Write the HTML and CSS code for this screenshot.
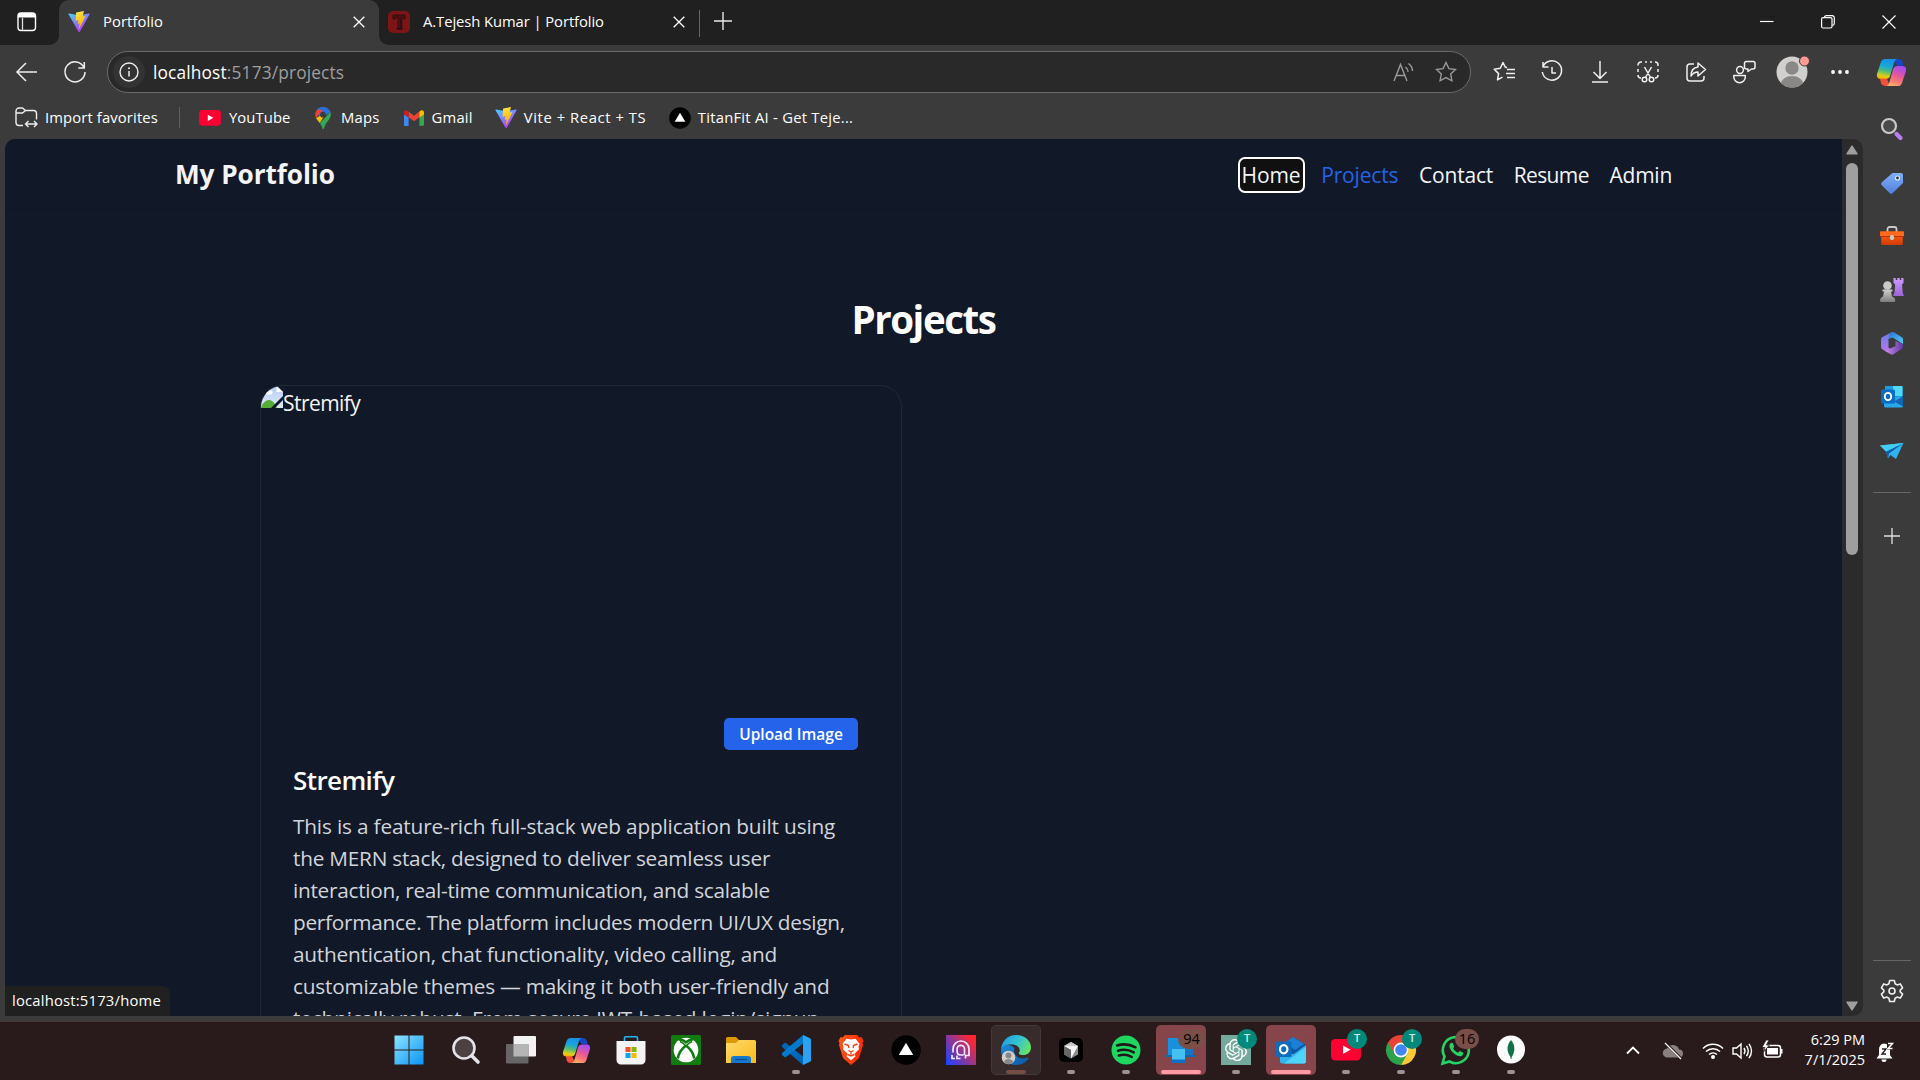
FILE: index.html
```html
<!DOCTYPE html>
<html lang="en">
<head>
<meta charset="utf-8">
<title>Portfolio</title>
<link rel="stylesheet" href="styles.css">
</head>
<body>
<svg class="defs" aria-hidden="true">
  <defs>
    <linearGradient id="viteBlue" x1="0" y1="0" x2="0.6" y2="1"><stop offset="0" stop-color="#41d1ff"/><stop offset="1" stop-color="#bd34fe"/></linearGradient>
    <linearGradient id="viteBolt" x1="0.4" y1="0" x2="0.6" y2="1"><stop offset="0" stop-color="#ffea83"/><stop offset="0.1" stop-color="#ffdd35"/><stop offset="1" stop-color="#ffa800"/></linearGradient>
    <linearGradient id="copA" x1="0.5" y1="0" x2="0.3" y2="1"><stop offset="0" stop-color="#1a8fe8"/><stop offset="0.35" stop-color="#16a6dc"/><stop offset="0.6" stop-color="#4dbb7a"/><stop offset="0.85" stop-color="#d8cf1e"/><stop offset="1" stop-color="#ffb000"/></linearGradient>
    <linearGradient id="copB" x1="0.7" y1="0" x2="0.3" y2="1"><stop offset="0" stop-color="#a04df5"/><stop offset="0.45" stop-color="#e5579b"/><stop offset="0.75" stop-color="#fb7a72"/><stop offset="1" stop-color="#ffb36b"/></linearGradient>
    <linearGradient id="win" x1="0" y1="0" x2="1" y2="1"><stop offset="0" stop-color="#8ce4ff"/><stop offset="1" stop-color="#0a93f5"/></linearGradient>
    <linearGradient id="brave" x1="0" y1="0" x2="1" y2="0.3"><stop offset="0" stop-color="#ff5a1c"/><stop offset="1" stop-color="#ff2a00"/></linearGradient>
    <linearGradient id="head" x1="0" y1="0.9" x2="1" y2="0.1"><stop offset="0" stop-color="#1f42ff"/><stop offset="0.55" stop-color="#a33583"/><stop offset="0.9" stop-color="#ff2630"/></linearGradient>
    <linearGradient id="edgeTop" x1="0" y1="0.3" x2="1" y2="0.7"><stop offset="0" stop-color="#1e9fe0"/><stop offset="0.5" stop-color="#35c3d5"/><stop offset="1" stop-color="#6be55a"/></linearGradient>
    <linearGradient id="edgeLow" x1="0" y1="0" x2="1" y2="1"><stop offset="0" stop-color="#1b8bd8"/><stop offset="1" stop-color="#0c59a4"/></linearGradient>
    <linearGradient id="folder" x1="0" y1="0" x2="1" y2="1"><stop offset="0" stop-color="#ffdb6e"/><stop offset="1" stop-color="#fbb917"/></linearGradient>
    <linearGradient id="tag" x1="0" y1="0" x2="0" y2="1"><stop offset="0" stop-color="#7fb0f5"/><stop offset="1" stop-color="#5080dc"/></linearGradient>
    <linearGradient id="rook" x1="0" y1="0" x2="0" y2="1"><stop offset="0" stop-color="#cf9cff"/><stop offset="1" stop-color="#9a63d8"/></linearGradient>
    <linearGradient id="pawn" x1="0" y1="0" x2="0" y2="1"><stop offset="0" stop-color="#d0d0d0"/><stop offset="1" stop-color="#7d7d7d"/></linearGradient>
    <linearGradient id="box" x1="0" y1="0" x2="0" y2="1"><stop offset="0" stop-color="#f7630c"/><stop offset="1" stop-color="#d23c08"/></linearGradient>
    <linearGradient id="m1" x1="0" y1="0" x2="0" y2="1"><stop offset="0" stop-color="#6a7de8"/><stop offset="1" stop-color="#b678e6"/></linearGradient>
    <linearGradient id="m2" x1="0" y1="0" x2="1" y2="1"><stop offset="0" stop-color="#2a6fd8"/><stop offset="1" stop-color="#54d0f8"/></linearGradient>
    <linearGradient id="m3" x1="0" y1="0" x2="1" y2="0"><stop offset="0" stop-color="#cf8bf0"/><stop offset="1" stop-color="#5d3aa0"/></linearGradient>
    <linearGradient id="sky" x1="0" y1="0" x2="0" y2="1"><stop offset="0" stop-color="#b7cdf7"/><stop offset="1" stop-color="#dfe9fb"/></linearGradient>
    <symbol id="vite" viewBox="0 0 32 32"><path d="M31.4 4.7 17 30.6a.8.8 0 0 1-1.4 0L.7 4.7a.8.8 0 0 1 .8-1.2l14.6 2.6 14.5-2.6a.8.8 0 0 1 .8 1.2z" fill="url(#viteBlue)"/><path d="M22.8.1 12.1 2.2a.4.4 0 0 0-.3.4L11.1 13.7a.4.4 0 0 0 .5.4l3-.7c.3 0 .5.2.5.5l-.9 4.4c0 .3.2.5.5.4l1.8-.5c.3 0 .6.2.5.5l-1.4 6.9c0 .4.5.7.7.3l8.900-18c.2-.3-.1-.7-.4-.6l-3.100.6a.4.4 0 0 1-.5-.5l2-7c.1-.3-.1-.6-.4-.5z" fill="url(#viteBolt)"/></symbol>
    <symbol id="copilot" viewBox="0 0 32 30"><path d="M17 1h6.500a4 4 0 0 1 3.700 2.800L28.500 8H22z" fill="#1746c9"/><path d="M14.500 29H9a4 4 0 0 1-3.800-2.800L4 21h7z" fill="#f0503c"/><path d="M9.500 1H22c-2 .5-2.800 2-3.400 4L14.500 18.500C13.700 21 12 21.500 10 21.500H4.500C1 21.500.4 18.500 1.300 15.500L5 4.500C5.900 2 7.300 1 9.500 1z" fill="url(#copA)"/><path d="M22.500 29H10.500c2-.5 2.700-2 3.300-4L17.700 11.500C18.500 9 20 8.200 22 8.200h5.500c3.500 0 4.100 3 3.200 6L27 25.500c-.8 2.500-2.300 3.500-4.500 3.500z" fill="url(#copB)"/></symbol>
    <symbol id="close" viewBox="0 0 12 12"><path d="M.7.7l10.600 10.600M11.300.7.7 11.300"/></symbol>
    <symbol id="star" viewBox="0 0 22 22"><path d="M11 1.500l2.900 6.100 6.600.9-4.800 4.600 1.200 6.700L11 16.600l-5.900 3.200 1.200-6.700L1.500 8.500l6.600-.9z"/></symbol>
    <symbol id="youtube" viewBox="0 0 30 22"><rect width="30" height="21.500" rx="4.500" fill="#ff0033"/><path d="M12 6.500v8.500l7.500-4.200z" fill="#fff"/></symbol>
    <symbol id="vercel" viewBox="0 0 30 30"><circle cx="15" cy="15" r="14.700" fill="#000"/><path d="M15 7.800 22.200 20H7.800z" fill="#fff"/></symbol>
  </defs>
</svg>

<div class="tabstrip">
  <div class="workspaces"><svg width="20" height="20" viewBox="0 0 20 20"><rect x="1" y="1" width="17.500" height="17.500" rx="3" fill="none" stroke="#fff" stroke-width="1.400"/><path d="M1 5.500V4a3 3 0 0 1 3-3h11.500a3 3 0 0 1 3 3v1.500z" fill="#fff"/><path d="M5.500 6v12" stroke="#ddd" stroke-width="1.300"/></svg></div>
  <div class="tab tab-active"><svg class="fav" width="22" height="22"><use href="#vite"/></svg><span class="title-first">Portfolio</span><svg class="x" width="12" height="12"><use href="#close"/></svg></div>
  <div class="tab tab-second"><svg class="fav" width="22" height="22" viewBox="0 0 22 22"><rect width="22" height="22" rx="5" fill="#7d1416"/><path d="M5 4h12v4h-1.500l-1-1.500h-1.500V17h1v1H9v-1h1V6.500H8L7 8H5z" fill="#5b0c0e" stroke="#2a1212" stroke-width="1"/><path d="M13.500 8v10h-4" fill="none" stroke="#221414" stroke-width="1.600"/></svg><span class="title-second">A.Tejesh Kumar | Portfolio</span><svg class="x" width="12" height="12"><use href="#close"/></svg></div>
  <div class="tab-new"><svg width="20" height="20" viewBox="0 0 20 20"><path d="M10 1v18M1 10h18" stroke="#e8e8e8" stroke-width="1.400"/></svg></div>
  <div class="win-controls">
    <svg width="14" height="14" viewBox="0 0 14 14"><path d="M0 6.500h13.500"/></svg>
    <svg width="14" height="14" viewBox="0 0 14 14"><rect x=".6" y="2.600" width="10.400" height="10.400" rx="1.500"/><path d="M3.500 2.500C3.500 1.200 4 .6 5.500.6H11a2.200 2.200 0 0 1 2.300 2.200V8.500c0 1.300-.8 1.900-2 2"/></svg>
    <svg width="14" height="14" viewBox="0 0 14 14"><path d="M.5.5l13 13M13.500.5l-13 13"/></svg>
  </div>
</div>

<div class="toolbar">
  <svg class="back" width="22" height="20" viewBox="0 0 22 20"><path d="M21 10H1M10 1L1 10l9 9"/></svg>
  <svg class="reload" width="22" height="22" viewBox="0 0 22 22"><path d="M20 6.500A10 10 0 1 0 21 11M20.300 1v6h-6"/></svg>
  <div class="address">
    <span class="info"><svg width="20" height="20" viewBox="0 0 20 20"><circle cx="10" cy="10" r="9" fill="none" stroke="#eee" stroke-width="1.400"/><path d="M10 9v5.500" stroke="#eee" stroke-width="1.500"/><circle cx="10" cy="6.200" r="1" fill="#eee"/></svg></span>
    <span class="url"><b>localhost</b>:5173/projects</span>
    <svg class="aloud" width="22" height="20" viewBox="0 0 22 20"><path d="M1 19L7.500 2.500 14 19M3.500 13.500h8M12.500 5q2.500 2 2.500 5M15.500 1.500q4 3 4 7.500"/></svg>
    <svg class="starbtn" width="22" height="22"><use href="#star"/></svg>
  </div>
  <div class="actions">
    <span><svg width="23" height="22" viewBox="0 0 23 22"><path d="M14 6.700L12.200 6 10 1.500 7.300 7.300 1.200 8.200l4.400 4.400-1.100 6.300 5-2.800M14 8.500h8M13 12.500h9M14 16.500h8"/></svg></span>
    <span><svg width="22" height="22" viewBox="0 0 22 22"><path d="M2 5.500A9.700 9.700 0 1 1 1.300 11M2 1v5h5.500M11 6v6h4"/></svg></span>
    <span><svg width="18" height="22" viewBox="0 0 18 22"><path d="M9 0v17M2.500 11L9 17.500 15.500 11M1 21h16"/></svg></span>
    <span><svg width="22" height="22" viewBox="0 0 22 22"><path d="M1 4.500V4a3 3 0 0 1 3-3h1M8 1h2M13 1h2M18 1a3 3 0 0 1 3 3v1M21 8v3M21 14a3 3 0 0 1-3 3M1 8v3M1 14a3 3 0 0 0 3 3M7.500 6l6 10.500M14.500 6l-6 10.500"/><circle cx="7.500" cy="18.500" r="2.300"/><circle cx="14.500" cy="18.500" r="2.300"/></svg></span>
    <span><svg width="22" height="22" viewBox="0 0 22 22"><path d="M9 3H5a3 3 0 0 0-3 3v11a3 3 0 0 0 3 3h11a3 3 0 0 0 3-3v-2M13 2l7.500 6.500L13 15v-4c-3.500 0-5 1-7 4 0-5 2.500-8.500 7-9z"/></svg></span>
    <span><svg width="24" height="24" viewBox="0 0 24 24"><circle cx="8" cy="10" r="3.400"/><path d="M1.800 15.500h11.500v1.500a5.700 5.700 0 0 1-11.500 0zM14.500 1.500h6.500a2 2 0 0 1 2 2V7a2 2 0 0 1-2 2h-1.500l-3.500 2.500V9h-1.500a2 2 0 0 1-2-2V3.500a2 2 0 0 1 2-2z"/></svg></span>
    <span class="avatar"><svg width="32" height="32" viewBox="0 0 32 32"><defs><clipPath id="av"><circle cx="16" cy="16" r="15.500"/></clipPath></defs><g clip-path="url(#av)" stroke="none"><rect width="32" height="32" fill="#d2d0ce"/><circle cx="16" cy="12" r="6.700" fill="#8a8886"/><ellipse cx="16" cy="28" rx="11" ry="8" fill="#8a8886"/></g><circle cx="28.500" cy="5" r="5" fill="#ff9b93" stroke="#3b3b3b" stroke-width="1"/></svg></span>
    <span><svg width="18" height="6" viewBox="0 0 18 6"><g fill="#fff" stroke="none"><circle cx="2" cy="3" r="1.900"/><circle cx="9" cy="3" r="1.900"/><circle cx="16" cy="3" r="1.900"/></g></svg></span>
  </div>
  <svg class="cop" width="31" height="29"><use href="#copilot"/></svg>
</div>

<div class="main">
  <div class="left">
    <div class="bookmarks">
      <svg class="b-import" width="24" height="22" viewBox="0 0 24 22"><path d="M8 18.500H4a3 3 0 0 1-3-3V4a3 3 0 0 1 3-3h3.500l3 2.500H18.500a3 3 0 0 1 3 3v6M1 6h6.500l3-2.500M11 17h10.500M13.500 14l-3 3 3 3M19 14l3 3-3 3"/></svg>
      <span class="bt-import">Import favorites</span>
      <i class="sep"></i>
      <svg class="b-yt" width="22" height="16"><use href="#youtube"/></svg><span class="bt-youtube">YouTube</span>
      <svg class="b-maps" width="16" height="22" viewBox="0 0 16 22"><path d="M8 0a8 8 0 0 0-6 2.700L8 8z" fill="#4a8af4"/><path d="M8 0a8 8 0 0 1 7.500 5L5 13 2 2.700A8 8 0 0 1 8 0z" fill="#2b6fdd"/><path d="M2 2.700A8 8 0 0 0 1 11l7-8z" fill="#ea4335"/><path d="M1 11c1 2 2.500 3 3.800 5L11 6z" fill="#fbbc04"/><path d="M15.500 5c1 4-.5 6.500-3 9.500-2 2.500-2.800 4.500-3.500 7-.3.700-1.200.7-1.500 0-.6-2-1.300-3.500-2.500-5.500z" fill="#34a853"/><circle cx="8" cy="7.700" r="2.900" fill="#3b3b3b"/></svg><span class="bt-maps">Maps</span>
      <svg class="b-gmail" width="20" height="16" viewBox="0 0 20 16"><path d="M0 4v10.500A1.200 1.200 0 0 0 1.300 16H4.600V6z" fill="#4285f4"/><path d="M20 4v10.500a1.200 1.200 0 0 1-1.300 1.300h-3.300V6z" fill="#34a853"/><path d="M4.600 7.200V1.600L10 5.700l5.400-4.100v5.600L10 11.300z" fill="#ea4335"/><path d="M0 2.500v2l4.600 3.200V1.600L3.500.8C2 -.3 0 .6 0 2.500z" fill="#c5221f"/><path d="M20 2.500v2l-4.600 3.200V1.600l1.100-.8C18-.3 20 .6 20 2.500z" fill="#fbbc04"/></svg><span class="bt-gmail">Gmail</span>
      <svg class="b-vite" width="22" height="22"><use href="#vite"/></svg><span class="bt-vite">Vite + React + TS</span>
      <svg class="b-titan" width="22" height="22"><use href="#vercel"/></svg><span class="bt-titan">TitanFit AI - Get Teje...</span>
    </div>
    <div class="viewport">
      <div class="page">
        <header class="nav">
          <span class="brand">My Portfolio</span>
          <nav class="links"><a class="home">Home</a><a class="active">Projects</a><a class="contact">Contact</a><a class="resume">Resume</a><a class="admin">Admin</a></nav>
        </header>
        <h1>Projects</h1>
        <article class="card">
          <div class="thumb"><svg width="22" height="22" viewBox="0 0 22 22"><path d="M0 0h16l6 6v16H0z" fill="url(#sky)"/><path d="M15.500 0v6H22z" fill="#fff"/><ellipse cx="8" cy="6.500" rx="3.500" ry="2.200" fill="#fff"/><path d="M0 22c1-5 5-8 8-8 4 0 6 4 8 8z" fill="#57ad3a"/><path d="M10 22L22 10v4l-8 8z" fill="#111827"/></svg><span class="alt">Stremify</span></div>
          <div class="card-body">
            <button class="upload">Upload Image</button>
            <h3>Stremify</h3>
            <p><span class="line1">This is a feature-rich full-stack web application built using</span><br><span class="line2">the MERN stack, designed to deliver seamless user</span><br><span class="line3">interaction, real-time communication, and scalable</span><br><span class="line4">performance. The platform includes modern UI/UX design,</span><br><span class="line5">authentication, chat functionality, video calling, and</span><br><span class="line6">customizable themes — making it both user-friendly and</span><br><span class="line7">technically robust. From secure JWT-based login/signup</span></p>
          </div>
        </article>
        <div class="status">localhost:5173/home</div>
      </div>
      <div class="scrollbar">
        <svg width="12" height="10" viewBox="0 0 12 10"><path d="M6 1.200L11 8.800H1z" fill="#9f9f9f" stroke="#9f9f9f" stroke-width="1.500" stroke-linejoin="round"/></svg>
        <i class="thumb-bar"></i>
        <svg class="down" width="12" height="10" viewBox="0 0 12 10"><path d="M6 8.800L11 1.200H1z" fill="#9f9f9f" stroke="#9f9f9f" stroke-width="1.500" stroke-linejoin="round"/></svg>
      </div>
    </div>
  </div>
  <aside class="sidebar">
    <svg width="24" height="24" viewBox="0 0 24 24"><circle cx="9" cy="9" r="7" fill="#4a4a4a" stroke="#c9c9c9" stroke-width="2.200"/><path d="M16.500 17l4 4" stroke="#b57ff0" stroke-width="4.200" stroke-linecap="round"/></svg>
    <svg width="24" height="24" viewBox="0 0 24 24"><path d="M12.500 2H21a2 2 0 0 1 2 2v8L12.500 22.300a2 2 0 0 1-2.700 0L1.600 14a2 2 0 0 1 0-2.600z" fill="url(#tag)"/><circle cx="17.500" cy="7" r="2" fill="#333" stroke="#dbe8ff" stroke-width="1.200"/></svg>
    <svg width="24" height="24" viewBox="0 0 24 24"><path d="M7.500 8V5a2 2 0 0 1 2-2h5a2 2 0 0 1 2 2v3" fill="none" stroke="#c8c8c8" stroke-width="1.800"/><rect x="1.200" y="9" width="21.600" height="12" rx="1.500" fill="url(#box)"/><rect x="0" y="7.300" width="24" height="5" rx="1" fill="#ff6a1c"/><path d="M0 12.500h24" stroke="#b5320a"/><rect x="10" y="11" width="4" height="5" rx="1.800" fill="#ccc"/></svg>
    <svg width="24" height="24" viewBox="0 0 24 24"><path d="M13.500 0h2.200v2h1.600V0h2.400v2h1.600V0h2.200v5l-1.500 1.500.7 8 1.200 3.500H13l1.500-3.500.7-8L13.500 5z" fill="url(#rook)"/><circle cx="7.500" cy="7.500" r="4.300" fill="#c9c9c9"/><path d="M2.500 11.500h10v2H11l1 5c2 .7 3.300 2 3.300 4 0 .8-.5 1.500-1.300 1.500H1.500C.6 24 0 23.300 0 22.500c0-2 1.300-3.300 3-4l1-5H2.500z" fill="url(#pawn)"/></svg>
    <svg width="24" height="24" viewBox="0 0 24 24"><path d="M12 1L2.500 6C1.500 6.600 1 7.500 1 8.500v7c0 1.500.7 2.500 2 3.200L7 21l3.500-3-2-1.500V8z" fill="url(#m1)"/><path d="M12 1c-2.500 1-3.500 3.500-3.500 7l4-1.500 10.500 6.500V8.500c0-1-.5-2-1.500-2.600L13.500 1z" fill="url(#m2)"/><path d="M23 13v2.500c0 1.200-.5 2-1.500 2.600L13.800 23c-1.200.7-2.400.7-3.600 0L5 20l10.500-5v-5z" fill="url(#m3)"/></svg>
    <svg width="24" height="24" viewBox="0 0 24 24"><path d="M5 1h16.500a1 1 0 0 1 1 1v10H5z" fill="#1f9be6"/><path d="M13 1h8.500a1 1 0 0 1 1 1v9H13z" fill="#50d9ff"/><path d="M4 12h19v9a1.500 1.500 0 0 1-1.500 1.500H5.500A1.500 1.500 0 0 1 4 21z" fill="#28a8ea"/><path d="M23 11.500L14 16.500l9 5z" fill="#1066b5"/><rect x="1" y="4.500" width="14" height="14" rx="1.500" fill="#0a6cc4"/><ellipse cx="8" cy="11.500" rx="3.200" ry="3.600" fill="none" stroke="#fff" stroke-width="1.900"/></svg>
    <svg width="24" height="24" viewBox="0 0 24 24"><path d="M0 6.500L23.500 4 16 20l-5.500-4-2.500 3.500-2-7z" fill="#2fb2ee"/><path d="M6 12.500L23.500 4 9 14.500l-1 5z" fill="#0d5fae"/><path d="M0 6.500L23.500 4 6 12.500z" fill="#43cdf5"/></svg>
    <i class="rule"></i>
    <svg class="add" width="16" height="16" viewBox="0 0 16 16"><path d="M8 0v16M0 8h16" stroke="#e0e0e0" stroke-width="1.300"/></svg>
    <i class="rule rule-low"></i>
    <svg class="gear" width="24" height="24" viewBox="0 0 24 24"><path d="M9.700 1.500h4.600l.8 3.300 2 1.100 3.200-1 2.300 4-2.400 2.200v1.800l2.400 2.200-2.300 4-3.200-1-2 1.100-.8 3.300H9.700l-.8-3.300-2-1.100-3.200 1-2.300-4 2.400-2.200v-1.800L1.400 8.900l2.300-4 3.200 1 2-1.100z" fill="none" stroke="#eee" stroke-width="1.600" stroke-linejoin="round"/><circle cx="12" cy="12" r="3" fill="none" stroke="#eee" stroke-width="1.600"/></svg>
  </aside>
</div>

<div class="taskbar">
  <div class="apps">
    <div class="app start"><svg width="30" height="30" viewBox="0 0 30 30"><path d="M.5.500h14v14H.500zM15.500.500h14v14h-14zM.500 15.500h14v14H.500zM15.500 15.500h14v14h-14z" fill="url(#win)"/></svg></div>
    <div class="app"><svg width="30" height="30" viewBox="0 0 30 30"><circle cx="13" cy="13" r="10.500" fill="#4d4040" stroke="#e4e4e8" stroke-width="2.600"/><path d="M21 21l6 6" stroke="#e4e4e8" stroke-width="3.600" stroke-linecap="round"/></svg></div>
    <div class="app"><svg width="30" height="30" viewBox="0 0 30 30"><rect x="7.500" y="1" width="22.500" height="20.500" rx="1" fill="#f2f2f2"/><rect x="0" y="9" width="22.500" height="19.500" rx="1" fill="#666"/><rect x="7.500" y="9" width="15" height="12.500" fill="#b5b5b5"/></svg></div>
    <div class="app"><svg width="29" height="27"><use href="#copilot"/></svg></div>
    <div class="app"><svg width="30" height="30" viewBox="0 0 30 30"><path d="M8.500 7V3a1.200 1.200 0 0 1 1.200-1.200h10.600A1.200 1.200 0 0 1 21.500 3v4" fill="none" stroke="#22b5ee" stroke-width="1.600"/><path d="M.5 6h29v19a4.500 4.500 0 0 1-4.500 4.500H5A4.500 4.500 0 0 1 .5 25z" fill="#f4f4f4"/><path d="M9.500 12h5v5h-5z" fill="#f25022"/><path d="M15.500 12h5v5h-5z" fill="#7fba00"/><path d="M9.500 18h5v5h-5z" fill="#00a4ef"/><path d="M15.500 18h5v5h-5z" fill="#ffb900"/></svg></div>
    <div class="app"><svg width="30" height="30" viewBox="0 0 30 30"><rect width="30" height="30" rx="1.500" fill="#107c10"/><circle cx="15" cy="15" r="12.300" fill="#fff"/><path d="M7.500 4.500C11 4 13.500 6 15 7.300 16.500 6 19 4 22.500 4.500M15 10.500c-4 3-7.500 8-8.300 13M15 10.500c4 3 7.500 8 8.300 13" fill="none" stroke="#107c10" stroke-width="2.600"/><path d="M9 6.500Q12.500 8 15 11q2.500-3 6-4.500" fill="none" stroke="#107c10" stroke-width="1.500"/></svg></div>
    <div class="app"><svg width="30" height="30" viewBox="0 0 30 30"><path d="M0 3.500A1.500 1.500 0 0 1 1.500 2h8.500l3 3v4H0z" fill="#dd9a06"/><path d="M0 8h10l3-3h15.500A1.500 1.500 0 0 1 30 6.500V28H0z" fill="url(#folder)"/><path d="M5 28v-4a3 3 0 0 1 3-3h14a3 3 0 0 1 3 3v4z" fill="#1579cc"/><path d="M9 24.500h12" stroke="#0a4f8f" stroke-width="1.300"/></svg></div>
    <div class="app run"><svg width="30" height="30" viewBox="0 0 30 30"><path d="M1 10l2.500-2c.6-.4 1-.3 1.500 0L24 23l-2 7L1 12z" fill="#0066b8"/><path d="M1 20l2.500 2c.6.400 1 .3 1.500 0L24 7l-2-7L1 18z" fill="#007acc"/><path d="M22 0l6.500 3c1 .5 1.500 1 1.500 2v20c0 1-.5 1.500-1.500 2L22 30z" fill="#2ba3f2"/></svg></div>
    <div class="app"><svg width="26" height="30" viewBox="0 0 26 30"><path d="M7 0h12l2.500 2.500 2-.5 2 4-1 2 .5 2L21 23l-8 7-8-7L1 10l.5-2-1-2 2-4 2 .5z" fill="url(#brave)"/><path d="M13 4.500l4.500-.8 4 5-1 3.500 .5 2-4.500 4.500 1 2.500L13 25.500 8.500 21.200l1-2.500L5 14.200l.5-2-1-3.500 4-5z" fill="#fff"/><path d="M6.500 9l4 1.500.3 2.500M19.500 9l-4 1.500-.3 2.500M10.500 15.500L13 17l2.500-1.500M13 17v2.500M9.500 19.500L13 21l3.500-1.500" fill="none" stroke="#ff3d0d" stroke-width="1.400"/></svg></div>
    <div class="app"><svg width="30" height="30"><use href="#vercel"/></svg></div>
    <div class="app"><svg width="30" height="30" viewBox="0 0 30 30"><rect width="30" height="30" fill="url(#head)"/><path d="M9 23.500H6V20M19.500 23.500v-3H23V14a8 8 0 0 0-16 0v3.500M14.500 23.500h-3.500v-3M18.500 20v-6a3.700 3.700 0 0 0-7.400 0v2c0 2.500 1.300 4 3.500 4h3" fill="none" stroke="#f1e9ff" stroke-width="1.700"/></svg></div>
    <div class="app focus"><svg width="30" height="30" viewBox="0 0 30 30"><path d="M0 14.500C0 24 6.500 30 15 30c5.500 0 10-2.800 12.500-6.500.5-.8-.2-1.300-1-1-7.500 2.800-15-1-13-9C11 9 2 8.500 0 14.500z" fill="url(#edgeLow)"/><path d="M0 14.500C.5 6 7 0 15 0c9 0 15 6 15 12.500 0 5-4 7.500-7.500 7.500-4 0-5.300-1.300-4.500-2.500 2-3-.3-7.500-6-8C6 9 1 11 0 14.500z" fill="url(#edgeTop)"/><circle cx="7.500" cy="22.500" r="6.800" fill="#d2d0ce"/><circle cx="7.500" cy="20.500" r="3" fill="#8a8886"/><path d="M2.800 27c1-4 8.400-4 9.400 0-3 3-6.400 3-9.400 0z" fill="#8a8886"/></svg></div>
    <div class="app run"><svg width="24" height="24" viewBox="0 0 24 24"><rect width="24" height="24" rx="5" fill="#000"/><path d="M12 4l7 4v8.500L12 20.500 5 16.500V8z" fill="#8b8b8b"/><path d="M5 8h14l-7 12.500V12z" fill="#f2f2f2"/><path d="M12 4l7 4H5z" fill="#c8c8c8"/><path d="M5 8l7 4v8.500L5 16.500z" fill="#666"/></svg></div>
    <div class="app run"><svg width="30" height="30" viewBox="0 0 30 30"><circle cx="15" cy="15" r="14.500" fill="#1ed760"/><path d="M6 10.500c6-1.800 13-1.200 18.500 1.800M7 15.700c5.500-1.500 11-1 15.800 1.700M7.800 20.500c4.500-1.200 9-.8 13 1.500" fill="none" stroke="#1e1818" stroke-width="2.500" stroke-linecap="round"/></svg></div>
    <div class="app alert"><svg width="30" height="30" viewBox="0 0 30 30"><path d="M2 3h8v18H2z" fill="#1a91e0"/><path d="M0 20h30v2H0z" fill="#0d69b5"/><path d="M6 7l4-4h9v14H6z" fill="#1c8fdc"/><path d="M6 15h13v13H6z" fill="#0e6fc6"/><path d="M6 14h13v10.500H6z" fill="#45c0f0"/><path d="M19 8h8v12h-8z" fill="#1675c0"/></svg><em class="count unread-phone">94</em></div>
    <div class="app run"><svg width="30" height="30" viewBox="0 0 30 30"><rect width="30" height="30" fill="#74aa9c"/><path transform="translate(4 4) scale(.92)" fill="#fff" d="M22.2819 9.8211a5.9847 5.9847 0 0 0-.5157-4.9108 6.0462 6.0462 0 0 0-6.5098-2.9A6.0651 6.0651 0 0 0 4.9807 4.1818a5.9847 5.9847 0 0 0-3.9977 2.9 6.0462 6.0462 0 0 0 .7427 7.0966 5.98 5.98 0 0 0 .511 4.9107 6.051 6.051 0 0 0 6.5146 2.9001A5.9847 5.9847 0 0 0 13.2599 24a6.0557 6.0557 0 0 0 5.7718-4.2058 5.9894 5.9894 0 0 0 3.9977-2.9001 6.0557 6.0557 0 0 0-.7475-7.0729zm-9.022 12.6081a4.4755 4.4755 0 0 1-2.8764-1.0408l.1419-.0804 4.7783-2.7582a.7948.7948 0 0 0 .3927-.6813v-6.7369l2.02 1.1686a.071.071 0 0 1 .038.052v5.5826a4.504 4.504 0 0 1-4.4945 4.4944zm-9.6607-4.1254a4.4708 4.4708 0 0 1-.5346-3.0137l.142.0852 4.783 2.7582a.7712.7712 0 0 0 .7806 0l5.8428-3.3685v2.3324a.0804.0804 0 0 1-.0332.0615L9.74 19.9502a4.4992 4.4992 0 0 1-6.1408-1.6464zM2.3408 7.8956a4.485 4.485 0 0 1 2.3655-1.9728V11.6a.7664.7664 0 0 0 .3879.6765l5.8144 3.3543-2.0201 1.1685a.0757.0757 0 0 1-.071 0l-4.8303-2.7865A4.504 4.504 0 0 1 2.3408 7.872zm16.5963 3.8558L13.1038 8.364 15.1192 7.2a.0757.0757 0 0 1 .071 0l4.8303 2.7913a4.4944 4.4944 0 0 1-.6765 8.1042v-5.6772a.79.79 0 0 0-.407-.667zm2.0107-3.0231l-.142-.0852-4.7735-2.7818a.7759.7759 0 0 0-.7854 0L9.409 9.2297V6.8974a.0662.0662 0 0 1 .0284-.0615l4.8303-2.7866a4.4992 4.4992 0 0 1 6.6802 4.66zM8.3065 12.863l-2.02-1.1638a.0804.0804 0 0 1-.038-.0567V6.0742a4.4992 4.4992 0 0 1 7.3757-3.4537l-.142.0805L8.704 5.459a.7948.7948 0 0 0-.3927.6813zm1.0976-2.3654l2.602-1.4998 2.6069 1.4998v2.9994l-2.5974 1.4997-2.6067-1.4997Z"/></svg><em class="badge">T</em></div>
    <div class="app alert"><svg width="30" height="30" viewBox="0 0 30 30"><path d="M4 12L17 2l13 9v15.500a2 2 0 0 1-2 2H6a2 2 0 0 1-2-2z" fill="#2fb4ee"/><path d="M4 11L17 2l13 8-12 9H4z" fill="#0c59a4"/><path d="M9 8l8-6 11 7-9 6z" fill="#1b7fd6"/><path d="M30 12v14.500a2 2 0 0 1-2 2H8z" fill="#50d3fa"/><rect x="0" y="6.500" width="15.500" height="15.500" rx="1.500" fill="#0f6cbd"/><ellipse cx="7.700" cy="14.200" rx="3.700" ry="4.100" fill="none" stroke="#fff" stroke-width="2.200"/></svg></div>
    <div class="app run"><svg width="30" height="22"><use href="#youtube"/></svg><em class="badge">T</em></div>
    <div class="app run"><svg width="30" height="30" viewBox="0 0 30 30"><path d="M2 7.500A15 15 0 0 0 15 30l7-11-7-4z" fill="#2ba24c"/><path d="M28 7.500A15 15 0 0 1 15 30l6.500-11.500L15 7.500z" fill="#fcc934"/><path d="M2 7.500A15 15 0 0 1 28 7.500H15L8.500 18.700z" fill="#ea4335"/><circle cx="15" cy="15" r="7.400" fill="#fff"/><circle cx="15" cy="15" r="5.800" fill="#4285f4"/></svg><em class="badge">T</em></div>
    <div class="app run"><svg width="30" height="30" viewBox="0 0 30 30"><path d="M1.500 28.500l2-7A13 13 0 1 1 8.500 26.500z" fill="none" stroke="#25d366" stroke-width="2.600"/><path d="M10 8c-3 2-1.500 6.500 2.500 10s8 4.500 9.500 1.500c.5-1 .5-1.700-.2-2l-2.500-1.300c-.6-.3-1 0-1.400.5l-.8 1c-2-.6-4-2.500-5-4.500l.8-1c.3-.4.300-.8.100-1.300L12 8.500c-.4-.9-1-1-2-.5z" fill="#25d366"/></svg><em class="count unread-chat">16</em></div>
    <div class="app run"><svg width="30" height="30" viewBox="0 0 30 30"><circle cx="15" cy="14.500" r="14" fill="#fbfbfb"/><path d="M15 5c4 4.500 4.800 11 .7 17l-.2 2h-.8l-.3-2C10 15.500 11 9.500 15 5z" fill="#11714a"/></svg></div>
  </div>
  <div class="tray">
    <svg class="chev" width="16" height="16" viewBox="0 0 16 16"><path d="M2 11.500l6-6 6 6" fill="none" stroke="#fff" stroke-width="1.800"/></svg>
    <svg class="cloud" width="22" height="18" viewBox="0 0 22 18"><path d="M5.500 15.500a4.500 4.500 0 0 1-.4-9A6.500 6.500 0 0 1 17 7.500a4 4 0 0 1 0 8z" fill="#8a8080"/><path d="M4 1.500l15 15" stroke="#291b1b" stroke-width="2.500"/><path d="M3 1l16 16" stroke="#fff" stroke-width="1.300"/></svg>
    <svg class="wifi" width="22" height="18" viewBox="0 0 22 18"><path d="M1 6.500a14 14 0 0 1 20 0M4 9.500a10 10 0 0 1 14 0M7 12.500a6 6 0 0 1 8 0" fill="none" stroke="#fff" stroke-width="1.500"/><circle cx="11" cy="15" r="2" fill="#fff"/></svg>
    <svg class="vol" width="22" height="18" viewBox="0 0 22 18"><path d="M1 6h3.500L9 2v14l-4.500-4H1zM12 6q2 3 0 6M14.500 3.800q3.500 5.200 0 10.400M17 1.800q5 7.200 0 14.400" fill="none" stroke="#fff" stroke-width="1.400"/></svg>
    <svg class="bat" width="22" height="18" viewBox="0 0 22 18"><rect x="2.500" y="3.500" width="16" height="11.500" rx="2.500" fill="none" stroke="#fff" stroke-width="1.500"/><rect x="5" y="6" width="11" height="6.500" fill="#fff"/><path d="M19.500 7v4.500" stroke="#fff" stroke-width="2"/><path d="M4-2L0 5.500h3L1.500 10 7.500 3H4.500L7-2z" fill="#fff" stroke="#291b1b" stroke-width=".8"/></svg>
    <div class="clock"><span>6:29 PM</span><span>7/1/2025</span></div>
    <svg class="bell" width="20" height="20" viewBox="0 0 20 20"><path d="M8 1.500a6 6 0 0 1 6 6V13l2.500 3.500h-16L3 13V7.500a5.500 5.500 0 0 1 5-6z" fill="#fff"/><path d="M5.500 17.500h5a2.500 2.500 0 0 1-5 0z" fill="#fff"/><path d="M6 7h4l-4 5h4" fill="none" stroke="#291b1b" stroke-width="1.400"/><rect x="11" y="0" width="7" height="7.500" fill="#291b1b"/><path d="M12 1.500h4.500L12 6.500h4.500" fill="none" stroke="#fff" stroke-width="1.500"/></svg>
  </div>
</div>
</body>
</html>
```
FILE: styles.css
```css
* { box-sizing: border-box; }
body { margin: 0; width: 1920px; height: 1080px; overflow: hidden; display: flex; flex-direction: column; background: #3b3b3b; color: #fff; font-family: "Open Sans", "Noto Sans", sans-serif; }
svg { display: block; flex: none; overflow: visible; }
.defs { position: absolute; width: 0; height: 0; }
span { white-space: nowrap; }

/* Browser tabs */
.tabstrip { display: flex; height: 45px; background: #202020; flex: none; font-size: 14.8px; }
.workspaces { width: 59px; padding: 12px 0 0 17px; background: radial-gradient(circle at 0 0, #202020 9.5px, #3b3b3b 10.5px) right bottom / 10px 10px no-repeat; }
.tab { display: flex; align-items: center; height: 45px; padding-bottom: 2px; }
.tab span { padding-bottom: 2px; }
.tab .x { stroke: #fff; stroke-width: 1.3; margin-left: auto; }
.tab .fav { margin-right: 13px; }
.tab-active { width: 320px; background: #3b3b3b; border-radius: 10px 10px 0 0; padding-left: 9px; padding-right: 14px; }
.tab-second { width: 321px; padding-left: 9px; padding-right: 15px; background: radial-gradient(circle at 100% 0, #202020 9.5px, #3b3b3b 10.5px) left bottom / 10px 10px no-repeat; position: relative; }
.tab-second::after { content: ""; position: absolute; right: 0; top: 10px; width: 1px; height: 27px; background: #666; }
.title-first { letter-spacing: .07px; }
.title-second { letter-spacing: -.08px; }
.tab-new { padding: 11px 0 0 13px; }
.win-controls { margin-left: auto; display: flex; gap: 47px; padding: 15px 24px 0 0; }
.win-controls svg { fill: none; stroke: #fff; stroke-width: 1.2; }

/* Navigation toolbar */
.toolbar { display: flex; align-items: center; height: 54px; flex: none; padding-left: 16px; }
.back, .reload { fill: none; stroke: #eee; stroke-width: 1.5; }
.reload { margin-left: 26px; }
.address { display: flex; align-items: center; width: 1364px; height: 42px; margin-left: 21px; border: 1px solid #6b6b6b; border-radius: 21px; background: #292929; padding: 0 13px 0 5px; }
.info { width: 32px; height: 32px; border-radius: 50%; background: #333; display: flex; align-items: center; justify-content: center; }
.url { font-size: 17.3px; letter-spacing: .16px; color: #9f9f9f; margin-left: 8px; }
.url b { font-weight: 400; color: #fff; }
.aloud, .starbtn { fill: none; stroke: #9a9a9a; stroke-width: 1.4; }
.aloud { margin-left: auto; margin-right: 20px; }
.actions { display: flex; margin-left: 9px; }
.actions span { width: 48px; display: flex; align-items: center; justify-content: center; }
.actions svg { fill: none; stroke: #f0f0f0; stroke-width: 1.5; stroke-linejoin: round; }
.cop { margin-left: 12px; }

.main { display: flex; height: 922px; flex: none; }
.left { width: 1865px; display: flex; flex-direction: column; }

/* Favorites bar */
.bookmarks { display: flex; align-items: center; height: 40px; padding: 0 0 3px 15px; font-size: 14.8px; }
.bookmarks span { padding-bottom: 2px; }
.b-import { fill: none; stroke: #eee; stroke-width: 1.4; }
.bt-import { margin-left: 6px; letter-spacing: .13px; }
.sep { width: 1px; height: 21px; background: #606060; margin: 0 19px 0 21px; }
.bt-youtube { margin-left: 8px; letter-spacing: .1px; }
.b-maps { margin-left: 24.5px; }
.bt-maps { margin-left: 10px; letter-spacing: .2px; }
.b-gmail { margin-left: 24.5px; }
.bt-gmail { margin-left: 7.5px; letter-spacing: .25px; }
.b-vite { margin-left: 22px; }
.bt-vite { margin-left: 7px; letter-spacing: .57px; }
.b-titan { margin-left: 22.5px; }
.bt-titan { margin-left: 7px; letter-spacing: .25px; }

/* Page */
.viewport { display: flex; width: 1858px; height: 877px; margin-left: 5px; border-radius: 10px 10px 10px 0; overflow: hidden; background: #2b2b2b; }
.page { width: 1837px; height: 877px; background: #111827; overflow: hidden; position: relative; }
.nav { display: flex; align-items: center; justify-content: space-between; height: 71px; padding: 0 170px; border-bottom: 1px solid #0f1623; }
.brand { font-size: 26.2px; letter-spacing: -.08px; font-weight: 700; color: #f3f4f6; }
.links { display: flex; gap: 20.75px; margin-top: 1px; font-size: 21px; line-height: 28px; color: #f3f4f6; }
.home { letter-spacing: -.09px; outline: 2px solid #fff; outline-offset: 2px; border-radius: 3px; background: #101010; box-shadow: 0 0 0 3px #101010; }
.active { letter-spacing: -.19px; color: #2563eb; }
.contact { letter-spacing: -.2px; }
.resume { letter-spacing: -.65px; }
.admin { letter-spacing: -.26px; }
h1 { margin: 84px 0 41px; text-align: center; font-size: 38.5px; letter-spacing: -1.45px; line-height: 50px; font-weight: 700; }
.card { width: 642px; height: 700px; margin-left: 255px; border: 1px solid #1f2937; border-radius: 22px; overflow: hidden; }
.thumb { display: flex; height: 332px; }
.thumb .alt { padding-top: 1px; font-size: 21px; letter-spacing: -.55px; line-height: 32px; color: #f3f4f6; }
.card-body { display: flex; flex-direction: column; padding: 0 33px 0 32px; }
.upload { align-self: flex-end; width: 134px; height: 32px; margin-right: 10px; border: 0; padding: 0; border-radius: 5px; background: #2563eb; color: #fff; font: 600 15.5px/33px "Open Sans", sans-serif; }
h3 { margin: 11px 0; font-size: 26px; letter-spacing: -.6px; line-height: 38px; font-weight: 600; }
p { margin: 0; font-size: 20.8px; line-height: 32px; color: #d1d5db; }
.line1 { letter-spacing: -.17px; }
.line2 { letter-spacing: -.24px; }
.line3 { letter-spacing: -.28px; }
.line4 { letter-spacing: -.265px; }
.line5 { letter-spacing: -.24px; }
.line6 { letter-spacing: -.225px; }
.line7 { letter-spacing: -.165px; }
.status { position: absolute; left: 0; bottom: 0; height: 30px; width: 165px; padding-left: 7px; background: #202020; border-top-right-radius: 7px; font-size: 14.8px; letter-spacing: .2px; line-height: 28px; }

.scrollbar { width: 21px; display: flex; flex-direction: column; padding: 6px 0 5px 4px; }
.thumb-bar { width: 12px; height: 392px; margin-top: 8px; border-radius: 6px; background: #9f9f9f; }
.scrollbar .down { margin-top: auto; }

/* Edge sidebar */
.sidebar { width: 55px; display: flex; flex-direction: column; align-items: center; padding: 18px 2px 0 0; }
.sidebar svg { margin-bottom: 29.6px; }
.rule { width: 38px; height: 1px; background: #666; }
.sidebar .add { margin: 35px 0 0; }
.rule-low { margin: auto 0 18px; }
.sidebar .gear { margin-bottom: 18px; }

/* Taskbar */
.taskbar { display: flex; height: 59px; background: #291b1b; border-top: 1px solid #453a38; padding-left: 386px; flex: none; }
.apps { display: flex; }
.app { width: 50px; height: 50px; margin: 3px 5px 0 0; display: flex; align-items: center; justify-content: center; position: relative; border-radius: 5px; }
.start svg { margin-left: -4px; }
.focus { background: #382b2b; border: 1px solid #453838; }
.alert { background: #85454b; }
.run::after, .focus::after, .alert::after { content: ""; position: absolute; bottom: 1px; height: 4px; width: 8px; border-radius: 2px; background: #9b9292; }
.focus::after { width: 20px; background: #754d45; bottom: 0; }
.alert::after { width: 40px; background: #ff99a4; }
.badge { position: absolute; left: 26px; top: 4px; width: 20px; height: 20px; border-radius: 50%; background: #00897b; font: 500 11px/20px Roboto, sans-serif; text-align: center; color: #cfe9e5; }
.count { position: absolute; top: 4px; height: 20px; border-radius: 10px; background: #7a4f47; color: #000; font: 400 14.5px/20px "Open Sans", sans-serif; text-align: center; }
.unread-phone { left: 22px; width: 27px; }
.unread-chat { left: 24px; width: 24px; }
.tray { margin-left: auto; display: flex; padding: 20px 24px 0 0; }
.cloud { margin-left: 21px; }
.wifi { margin-left: 18px; }
.vol, .bat { margin-left: 8px; }
.clock { display: flex; flex-direction: column; align-items: flex-end; width: 68px; margin: -12px 11px 0 13px; font-size: 14.5px; line-height: 20px; }
```
